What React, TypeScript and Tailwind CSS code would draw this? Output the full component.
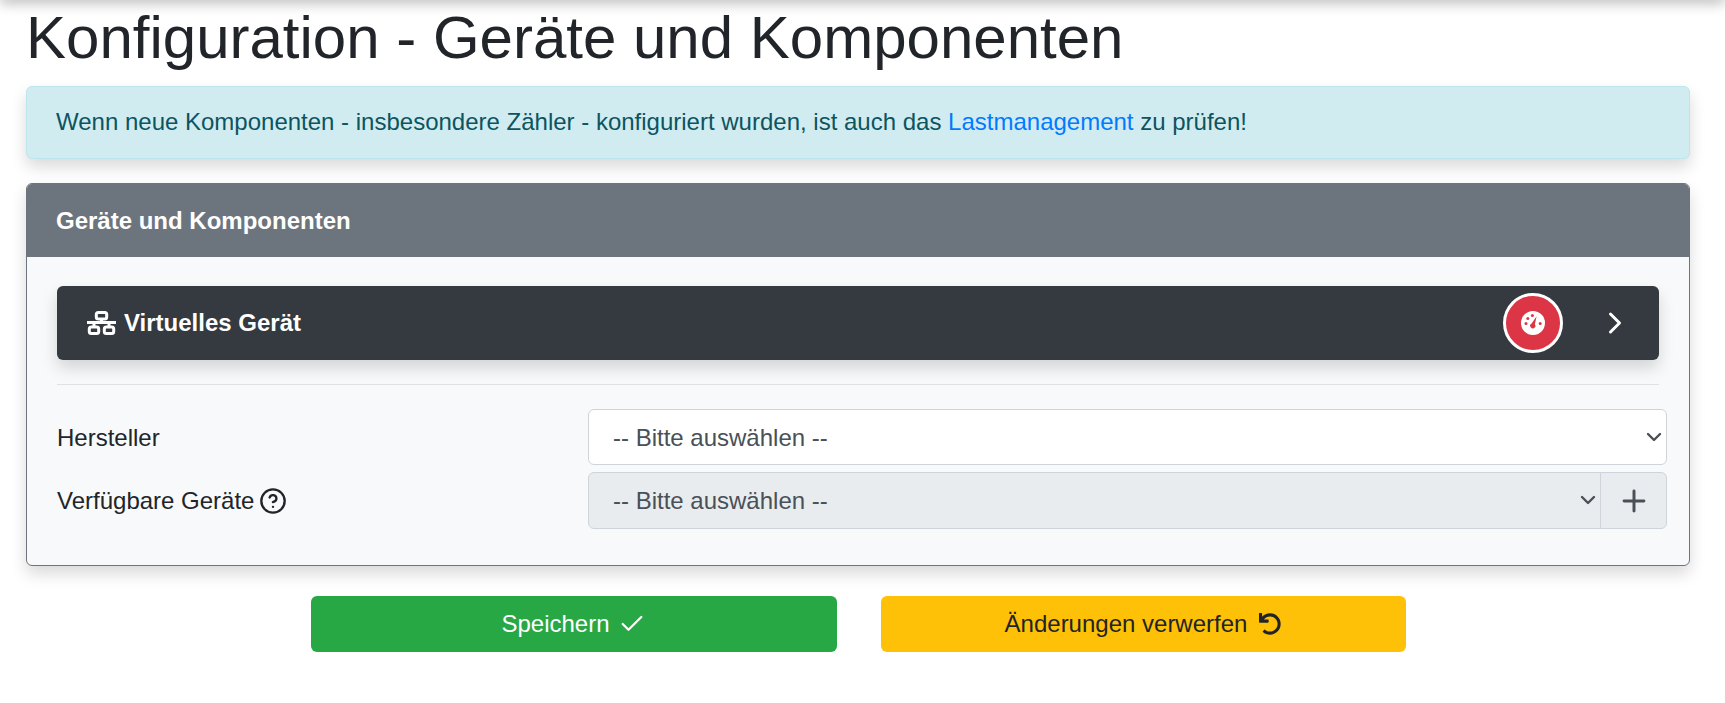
import { ChevronRight, ChevronDown, Check, CircleHelp, Plus } from 'lucide-react';
import { FaUndo } from 'react-icons/fa';

function NetworkIcon() {
  return (
    <svg width="29" height="24" viewBox="0 0 29 24" fill="none" stroke="currentColor" strokeWidth="3" className="mr-[8px] shrink-0">
      <rect x="9.3" y="1.5" width="10.4" height="6.4" rx="2" />
      <rect x="2.3" y="16" width="9.4" height="6.5" rx="2" />
      <rect x="17.3" y="16" width="9.4" height="6.5" rx="2" />
      <path d="M0 11.5H29M14.5 8v3.5M7 11.5V16M22 11.5V16" />
    </svg>
  );
}

function GaugeIcon() {
  return (
    <svg width="24" height="24" viewBox="0 0 24 24">
      <circle cx="12" cy="12" r="12" fill="#fff" />
      <path d="M15.6 5.2 L13.9 13.2 A2.6 2.6 0 1 1 10.6 12.4 Z" fill="#dc3545" />
      <circle cx="5" cy="12.5" r="1.5" fill="#dc3545" />
      <circle cx="6.8" cy="7.4" r="1.5" fill="#dc3545" />
      <circle cx="11.4" cy="4.6" r="1.5" fill="#dc3545" />
      <circle cx="19.2" cy="12.5" r="1.5" fill="#dc3545" />
    </svg>
  );
}

export default function App() {
  return (
    <div className="relative h-[703px] overflow-hidden bg-white px-[26px] font-['Liberation_Sans',Arial,sans-serif] text-[24px] leading-[36px] text-[#212529]">
      <div className="absolute inset-x-0 -top-[10px] h-[10px] shadow-[0_2px_14px_rgba(0,0,0,0.35)]" />

      <h1 className="pt-[4px] mb-[15px] text-[60px] leading-[67px] font-normal">Konfiguration - Geräte und Komponenten</h1>

      <div className="h-[73px] w-[1664px] mb-[24px] rounded-[6px] border border-[#bee5eb] bg-[#d1ecf1] px-[29px] py-[17px] text-[#0c5460] shadow-[0_8px_16px_rgba(0,0,0,0.15)]">
        Wenn neue Komponenten - insbesondere Zähler - konfiguriert wurden, ist auch das <a className="text-[#007bff]">Lastmanagement</a> zu prüfen!
      </div>

      <div className="w-[1664px] h-[383px] rounded-[6px] border border-[#6c757d] bg-[#f8f9fa] shadow-[0_8px_16px_rgba(0,0,0,0.15)]">
        <div className="flex h-[73px] items-center rounded-t-[5px] bg-[#6c757d] px-[29px] font-bold text-white">Geräte und Komponenten</div>

        <div className="px-[30px] pt-[29px]">
          <div className="flex h-[74px] items-center rounded-[6px] bg-[#343a40] pl-[30px] pr-[26px] font-bold text-white shadow-[0_8px_16px_rgba(0,0,0,0.15)]">
            <NetworkIcon />
            <span className="flex-1">Virtuelles Gerät</span>
            <span className="mr-[34px] flex h-[60px] w-[60px] items-center justify-center rounded-full border-[3px] border-white bg-[#dc3545]">
              <GaugeIcon />
            </span>
            <ChevronRight className="h-[36px] w-[36px]" strokeWidth={2} />
          </div>

          <hr className="mt-[24px] mb-[24px] border-t border-[#dfe1e4]" />

          <div className="flex h-[56px] items-center">
            <label className="w-[531px] shrink-0 pt-[2px]">Hersteller</label>
            <div className="relative h-[56px] w-[1079px] shrink-0">
              <select className="h-full w-full appearance-none rounded-[6px] border border-[#ced4da] bg-white px-[24px] pt-[2px] text-[24px] text-[#495057]">
                <option>-- Bitte auswählen --</option>
              </select>
              <ChevronDown className="pointer-events-none absolute right-[1px] top-[16px] h-[24px] w-[24px] text-[#495057]" strokeWidth={2.4} />
            </div>
          </div>

          <div className="mt-[7px] flex h-[57px] items-center">
            <label className="flex w-[531px] shrink-0 items-center">
              Verfügbare Geräte
              <CircleHelp className="ml-[5px] h-[28px] w-[28px]" strokeWidth={2} />
            </label>
            <div className="flex h-[57px] w-[1079px] shrink-0">
              <div className="relative h-full min-w-0 flex-1">
                <select disabled className="h-full w-full appearance-none rounded-l-[6px] border border-[#ced4da] bg-[#e9ecef] px-[24px] text-[24px] text-[#495057] opacity-100">
                  <option>-- Bitte auswählen --</option>
                </select>
                <ChevronDown className="pointer-events-none absolute right-[1px] top-[16px] h-[24px] w-[24px] text-[#495057]" strokeWidth={2.4} />
              </div>
              <span className="-ml-px flex w-[67px] items-center justify-center rounded-r-[6px] border border-[#ced4da] bg-[#e9ecef] text-[#495057]">
                <Plus className="h-[34px] w-[34px]" strokeWidth={2.1} />
              </span>
            </div>
          </div>
        </div>
      </div>

      <div className="mt-[30px] flex justify-center gap-[44px] pr-[9px]">
        <button className="flex h-[56px] w-[526px] items-center justify-center rounded-[6px] bg-[#28a745] text-white">
          Speichern
          <Check className="ml-[8px] h-[28px] w-[28px]" strokeWidth={1.9} />
        </button>
        <button className="flex h-[56px] w-[525px] items-center justify-center rounded-[6px] bg-[#ffc107] text-[#212529]">
          Änderungen verwerfen
          <FaUndo className="ml-[12px] h-[22px] w-[22px]" />
        </button>
      </div>
    </div>
  );
}
